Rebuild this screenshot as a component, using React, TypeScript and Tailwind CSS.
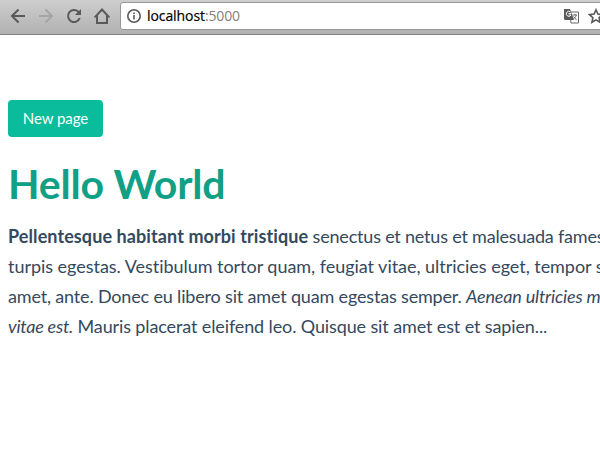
export default function App() {
  return (
    <div className="h-[450px] w-[600px] overflow-hidden bg-white font-['Lato',sans-serif] text-[#34495e]">
      <header className="flex h-[35px] items-start overflow-hidden border-b border-[#818181] bg-linear-to-b from-[#cecece] to-[#b1b1b1]">
        <div className="flex w-[120px] shrink-0 items-center gap-[12px] pl-[10px] pt-[8px]">
          <svg width="16" height="16" viewBox="0 0 16 16" fill="none" stroke="#595959" strokeWidth="2"><path d="M15 8H2.5M8.5 1.5 2 8l6.500 6.500" /></svg>
          <svg width="16" height="16" viewBox="0 0 16 16" fill="none" stroke="#a5a5a5" strokeWidth="2"><path d="M1 8h12.500M7.500 1.500 14 8l-6.500 6.500" /></svg>
          <svg width="16" height="16" viewBox="0 0 16 16" fill="none" stroke="#595959" strokeWidth="2"><path d="M13.700 10A6 6 0 1 1 12.300 3.800L13.500 5" /><path d="M15 1v6H9z" fill="#595959" stroke="none" /></svg>
          <svg width="16" height="16" viewBox="0 0 16 16" fill="none" stroke="#595959" strokeWidth="2"><path d="M1.500 8.500H3V15h10V8.500h1.500L8 1.500z" /></svg>
        </div>
        <div className="mt-[2px] flex h-[28px] w-[490px] shrink-0 items-center rounded-[3px] border border-[#989898] bg-white">
          <svg className="ml-[6px] shrink-0" width="14" height="14" viewBox="0 0 14 14" fill="none" stroke="#5a5a5a" strokeWidth="1.6"><circle cx="7" cy="7" r="6.200" /><path d="M7 6v4.500M7 3.500V5" /></svg>
          <span className="ml-[6px] w-[410px] text-[14px] leading-[20px] text-black font-['Open_Sans',sans-serif]">
            <span className="tracking-[-0.08px] [-webkit-text-stroke:0.2px_black]">localhost</span><span className="tracking-[-0.15px] text-[#808080]">:5000</span>
          </span>
          <svg className="ml-[7px] shrink-0" width="15" height="15" viewBox="0 0 15 15">
            <path d="M6 3h8.500v11H7z" fill="white" stroke="#686868" />
            <path d="M0 0h6l4 11H1L0 10z" fill="#5a5a5a" />
            <path d="M7 4.500H4.500M6.500 3A2.500 2.500 0 1 0 7 6H4.800" fill="none" stroke="white" />
            <path d="M8.500 6H13M11 5v1M12.300 6c-.5 2-1.800 3-3 4M9.500 7.500l3 3.500" fill="none" stroke="#686868" />
          </svg>
          <svg className="ml-[9px] shrink-0" width="16" height="16" viewBox="0 0 16 16" fill="none" stroke="#595959" strokeWidth="1.6"><path d="m8 1.800 1.900 4.300 4.700.5-3.500 3.100 1 4.600L8 11.900l-4.100 2.400 1-4.600-3.500-3.100 4.700-.5z" /></svg>
        </div>
      </header>
      <main className="w-[640px] px-[8px] pt-[65px]">
        <button className="block h-[37px] w-[95px] rounded-[4px] bg-[#0abc9c] text-[15px] tracking-[-0.06px] text-white">New page</button>
        <h1 className="mt-[23px] text-[41px] font-bold leading-[48px] tracking-[-0.18px] text-[#10a085]">Hello World</h1>
        <p className="mt-[13px] whitespace-nowrap text-[18px] leading-[30px]">
          <strong className="tracking-[0.09px]">Pellentesque habitant morbi tristique</strong><span className="tracking-[-0.2px]"> senectus et netus et malesuada fames ac</span><br />
          <span className="tracking-[-0.035px]">turpis egestas. Vestibulum tortor quam, feugiat vitae, ultricies eget, tempor sit</span><br />
          <span className="tracking-[-0.17px]">amet, ante. Donec eu libero sit amet quam egestas semper. <em>Aenean ultricies mi</em></span><br />
          <span className="tracking-[-0.12px]"><em className="tracking-[-0.24px]">vitae est.</em> Mauris placerat eleifend leo. Quisque sit amet est et sapien...</span>
        </p>
      </main>
    </div>
  );
}
